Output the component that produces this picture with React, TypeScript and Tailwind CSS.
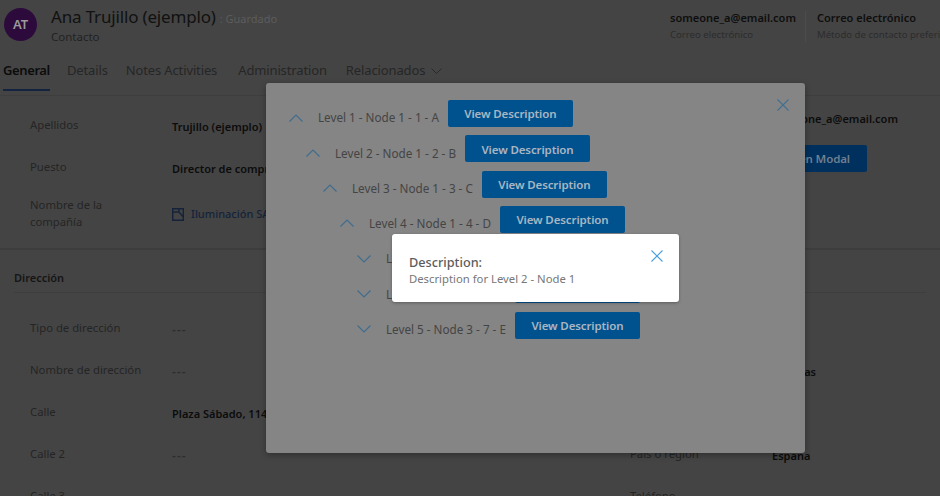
const FONT = "font-['Noto_Sans','Open_Sans',sans-serif]";

const Chevron = ({ up }: { up: boolean }) => (
  <svg width="14" height="8" viewBox="0 0 14 8" fill="none" stroke="#3f6d8e" strokeWidth="1.2" className="shrink-0">
    <polyline points={up ? '0.5,7.5 7,1 13.5,7.5' : '0.5,0.5 7,7 13.5,0.5'} />
  </svg>
);

const CloseIcon = ({ color }: { color: string }) => (
  <svg width="12" height="12" viewBox="0 0 12 12" fill="none" stroke={color} strokeWidth="1.1">
    <path d="M0.5 0.5 L11.5 11.5 M11.5 0.5 L0.5 11.5" />
  </svg>
);

const Field = ({ label, value, bold }: { label: string; value: string; bold?: boolean }) => (
  <div className="flex h-[42px] items-center">
    <span className="w-[142px] text-[11.3px] text-[#242424]">{label}</span>
    <span className={`mt-1 font-semibold ${bold ? 'text-[11px] text-[#0c0c0c]' : 'text-[12px] tracking-[0.09em] text-[#2e2e2e]'}`}>{value}</span>
  </div>
);

const rows = [
  { indent: 'pl-[23px]', text: 'Level 1 - Node 1 - 1 - A', up: true },
  { indent: 'pl-[40px]', text: 'Level 2 - Node 1 - 2 - B', up: true },
  { indent: 'pl-[57px]', text: 'Level 3 - Node 1 - 3 - C', up: true },
  { indent: 'pl-[74px]', text: 'Level 4 - Node 1 - 4 - D', up: true },
  { indent: 'pl-[91px]', text: 'Level 5 - Node 1 - 5 - E', up: false },
  { indent: 'pl-[91px]', text: 'Level 5 - Node 2 - 6 - E', up: false },
  { indent: 'pl-[91px]', text: 'Level 5 - Node 3 - 7 - E', up: false },
];

export default function App() {
  return (
    <div className={`relative h-[496px] w-[940px] overflow-hidden bg-[#444444] ${FONT}`}>
      <div className="flex h-[58px] items-start justify-between pl-1 pt-2">
        <div className="flex items-start">
          <div className="flex h-[33px] w-[33px] items-center justify-center rounded-full bg-[#2c0a3c] text-[13px] font-semibold text-[#9a9a9a]">
            AT
          </div>
          <div className="ml-[14px]">
            <div className="flex items-baseline leading-[18px]">
              <span className="text-[17px] tracking-[-0.01em] text-[#111111]">Ana Trujillo (ejemplo)</span>
              <span className="ml-[4px] text-[11px] text-[#5c5c5c]">: Guardado</span>
            </div>
            <div className="text-[11.5px] leading-[18px] text-[#222222]">Contacto</div>
          </div>
        </div>
        <div className="flex w-[270px] shrink-0 overflow-hidden pt-[3px]">
          <div className="w-[136px] shrink-0 border-r border-[#4c4c4c]">
            <div className="text-[11px] font-semibold leading-[14px] text-[#0e0e0e]">someone_a@email.com</div>
            <div className="mt-[3px] text-[9.6px] leading-[14px] text-[#2c2c2c]">Correo electrónico</div>
          </div>
          <div className="ml-[11px] shrink-0">
            <div className="text-[11px] font-semibold leading-[14px] text-[#0e0e0e]">Correo electrónico</div>
            <div className="mt-[3px] whitespace-nowrap text-[9.6px] leading-[14px] text-[#2c2c2c]">Método de contacto preferido</div>
          </div>
        </div>
      </div>

      <div className="flex h-[38px] items-start gap-[17px] border-b border-[#3e3e3e] pl-[3px] pt-[3px] text-[13px] tracking-[-0.01em] text-[#262626]">
        <span className="h-[30px] border-b-2 border-[#14233f] font-semibold tracking-[-0.03em] text-[#0c0c0c]">General</span>
        <span>Details</span>
        <span className="ml-[1px]">Notes Activities</span>
        <span className="ml-[4px]">Administration</span>
        <span className="ml-[2px] flex items-center gap-[6px]">
          Relacionados
          <svg width="11" height="6" viewBox="0 0 11 6" fill="none" stroke="#2a2a2a" strokeWidth="1">
            <polyline points="0.5,0.5 5.5,5.5 10.5,0.5" />
          </svg>
        </span>
      </div>

      <div className="flex h-[154px] border-b-2 border-[#3d3d3d] pl-[30px]">
        <div className="w-[600px] pt-2">
          <Field label="Apellidos" value="Trujillo (ejemplo)" bold />
          <Field label="Puesto" value="Director de compras" bold />
          <div className="flex h-[52px] items-center">
            <span className="-mt-[2px] w-[142px] text-[11.3px] leading-[17px] text-[#242424]">
              Nombre de la
              <br />
              compañía
            </span>
            <span className="mt-[1px] flex items-center gap-[7px] text-[11px] font-medium text-[#14233a]">
              <svg width="12" height="13" viewBox="0 0 12 13" fill="none" stroke="#14233a" strokeWidth="1.4">
                <path d="M0.7 0.7 H11.3 V12.3 H0.7 Z M0.7 4 H7 L11.3 9 M7 4 V0.7" />
              </svg>
              Iluminación SA
            </span>
          </div>
        </div>
        <div className="w-[280px]">
          <Field label="Correo electrónico" value="someone_a@email.com" bold />
          <div className="mt-[7px] flex justify-end pr-[43px]">
            <span className="flex h-[27px] items-center rounded-[2px] bg-[#00305d] px-[17px] text-[11.5px] font-semibold tracking-[-0.01em] text-[#6e7f90]">
              Open Modal
            </span>
          </div>
        </div>
      </div>

      <div className="mx-[14px] flex h-[43px] items-end border-b border-[#3e3e3e] pb-[6px] text-[11px] font-semibold text-[#151515]">
        Dirección
      </div>

      <div className="flex pl-[30px] pt-[14px]">
        <div className="w-[600px]">
          <Field label="Tipo de dirección" value="---" />
          <Field label="Nombre de dirección" value="---" />
          <Field label="Calle" value="Plaza Sábado, 114" bold />
          <Field label="Calle 2" value="---" />
          <Field label="Calle 3" value="---" />
        </div>
        <div className="w-[280px]">
          <Field label="Ciudad" value="---" />
          <Field label="Provincia" value="Asturias" bold />
          <Field label="Código postal" value="---" />
          <Field label="País o región" value="España" bold />
          <Field label="Teléfono" value="---" />
        </div>
      </div>

      <div className="absolute left-[266px] top-[83px] h-[370px] w-[539px] rounded-[3px] bg-[#858585] pt-[17px] shadow-[0_2px_6px_rgba(0,0,0,0.3)]">
        <button className="absolute right-[16px] top-[16px]">
          <CloseIcon color="#426f90" />
        </button>
        <div className="flex flex-col gap-[8.3px]">
          {rows.map((row) => (
            <div key={row.text} className={`flex h-[27px] items-center ${row.indent}`}>
              <span className="mt-2">
                <Chevron up={row.up} />
              </span>
              <span className="ml-[15px] mt-[9px] whitespace-nowrap text-[11.7px] text-[#444444]">{row.text}</span>
              <button className="ml-[9px] h-[27px] w-[125px] shrink-0 rounded-[2px] bg-[#00528f] pt-[1px] text-[11.5px] font-semibold tracking-[-0.01em] text-[#a9b6c2]">
                View Description
              </button>
            </div>
          ))}
        </div>
      </div>

      <div className="absolute left-[392px] top-[234px] h-[68px] w-[287px] rounded-[3px] bg-white pl-[17px] pt-[19px] shadow-[0_1px_3px_rgba(0,0,0,0.3)]">
        <button className="absolute right-[16px] top-[16px]">
          <CloseIcon color="#4a9fd8" />
        </button>
        <div className="text-[12.7px] font-medium leading-[18px] text-[#5c5c5c]">Description:</div>
        <div className="text-[11.3px] leading-[16px] text-[#777777]">Description for Level 2 - Node 1</div>
      </div>
    </div>
  );
}
